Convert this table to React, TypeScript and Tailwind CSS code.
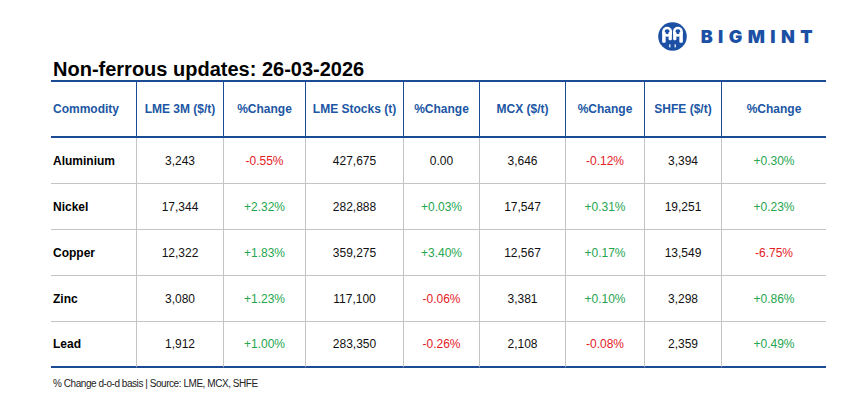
import React from "react";

type Row = {
  name: string;
  cells: { v: string; c?: "r" | "g" }[];
};

const rows: Row[] = [
  {
    name: "Aluminium",
    cells: [
      { v: "3,243" },
      { v: "-0.55%", c: "r" },
      { v: "427,675" },
      { v: "0.00" },
      { v: "3,646" },
      { v: "-0.12%", c: "r" },
      { v: "3,394" },
      { v: "+0.30%", c: "g" },
    ],
  },
  {
    name: "Nickel",
    cells: [
      { v: "17,344" },
      { v: "+2.32%", c: "g" },
      { v: "282,888" },
      { v: "+0.03%", c: "g" },
      { v: "17,547" },
      { v: "+0.31%", c: "g" },
      { v: "19,251" },
      { v: "+0.23%", c: "g" },
    ],
  },
  {
    name: "Copper",
    cells: [
      { v: "12,322" },
      { v: "+1.83%", c: "g" },
      { v: "359,275" },
      { v: "+3.40%", c: "g" },
      { v: "12,567" },
      { v: "+0.17%", c: "g" },
      { v: "13,549" },
      { v: "-6.75%", c: "r" },
    ],
  },
  {
    name: "Zinc",
    cells: [
      { v: "3,080" },
      { v: "+1.23%", c: "g" },
      { v: "117,100" },
      { v: "-0.06%", c: "r" },
      { v: "3,381" },
      { v: "+0.10%", c: "g" },
      { v: "3,298" },
      { v: "+0.86%", c: "g" },
    ],
  },
  {
    name: "Lead",
    cells: [
      { v: "1,912" },
      { v: "+1.00%", c: "g" },
      { v: "283,350" },
      { v: "-0.26%", c: "r" },
      { v: "2,108" },
      { v: "-0.08%", c: "r" },
      { v: "2,359" },
      { v: "+0.49%", c: "g" },
    ],
  },
];

const headers = [
  "LME 3M ($/t)",
  "%Change",
  "LME Stocks (t)",
  "%Change",
  "MCX ($/t)",
  "%Change",
  "SHFE ($/t)",
  "%Change",
];

function Logo() {
  return (
    <div className="flex items-center">
      <svg width="29" height="29" viewBox="-14 -14 28 28" className="mr-[14px]">
        <circle cx="0" cy="0" r="13.8" fill="#1c50a5" />
        {/* left figure */}
        <circle cx="-5.2" cy="-4.5" r="4.8" fill="#fff" />
        <circle cx="-5.2" cy="-4.5" r="2.4" fill="#1c50a5" />
        <rect x="-10" y="-4.5" width="3.4" height="10.5" rx="1" fill="#fff" />
        <rect x="-3.8" y="-4.5" width="3.2" height="8" rx="1" fill="#fff" />
        {/* right figure */}
        <circle cx="5.2" cy="-4.5" r="4.8" fill="#fff" />
        <circle cx="5.2" cy="-4.5" r="2.4" fill="#1c50a5" />
        <rect x="6.6" y="-4.5" width="3.4" height="10.5" rx="1" fill="#fff" />
        <rect x="0.6" y="-4.5" width="3.2" height="8" rx="1" fill="#fff" />
        {/* bottom marks */}
        <rect x="-3.2" y="7.5" width="1.2" height="3" fill="#fff" />
        <rect x="2" y="7.5" width="1.2" height="3" fill="#fff" />
      </svg>
      <span
        className="text-[18px] leading-none font-black tracking-[5.4px] text-[#1c50a5]"
        style={{ fontFamily: "Inter, 'Liberation Sans', sans-serif" }}
      >
        BIGMINT
      </span>
    </div>
  );
}

export default function App() {
  return (
    <div
      className="w-[855px] h-[405px] bg-white text-black"
      style={{ fontFamily: "'Liberation Sans', Arial, sans-serif" }}
    >
      <div className="h-[59px] pt-[22px] pr-[37px] flex justify-end items-start">
        <Logo />
      </div>
      <div className="ml-[53px] h-[20px] leading-[20px] text-[20px] font-bold text-black">
        Non-ferrous updates: 26-03-2026
      </div>
      <div className="ml-[51px] mt-[1px] w-[775px] grid grid-cols-[85px_87px_82px_98px_76px_86px_79px_77px_105px] border-t-2 border-[#1b4b94]">
        <div className="h-[56px] border-b-2 border-[#1b4b94] flex items-center pl-[2px] text-[12px] font-bold text-[#2056a4]">
          Commodity
        </div>
        {headers.map((h, i) => (
          <div
            key={i}
            className="h-[56px] border-b-2 border-l border-[#1b4b94] flex items-center justify-center text-[12px] font-bold text-[#2056a4]"
          >
            {h}
          </div>
        ))}
        {rows.map((r, ri) => {
          const last = ri === rows.length - 1;
          const bottom = last
            ? "border-b-2 border-b-[#1b4b94]"
            : "border-b border-b-[#c4c4c4]";
          return (
            <React.Fragment key={r.name}>
              <div
                className={`h-[46px] ${bottom} flex items-center pl-[2px] text-[12px] font-bold`}
              >
                {r.name}
              </div>
              {r.cells.map((c, ci) => (
                <div
                  key={ci}
                  className={`h-[46px] ${bottom} border-l border-l-[#c4c4c4] flex items-center justify-center text-[12px] ${
                    c.c === "r"
                      ? "text-[#e3201f]"
                      : c.c === "g"
                      ? "text-[#26a550]"
                      : "text-[#111]"
                  }`}
                >
                  {c.v}
                </div>
              ))}
            </React.Fragment>
          );
        })}
      </div>
      <div className="ml-[53px] mt-[10px] text-[10px] leading-[12px] tracking-[-0.45px] text-[#222]">
        % Change d-o-d basis | Source: LME, MCX, SHFE
      </div>
    </div>
  );
}
